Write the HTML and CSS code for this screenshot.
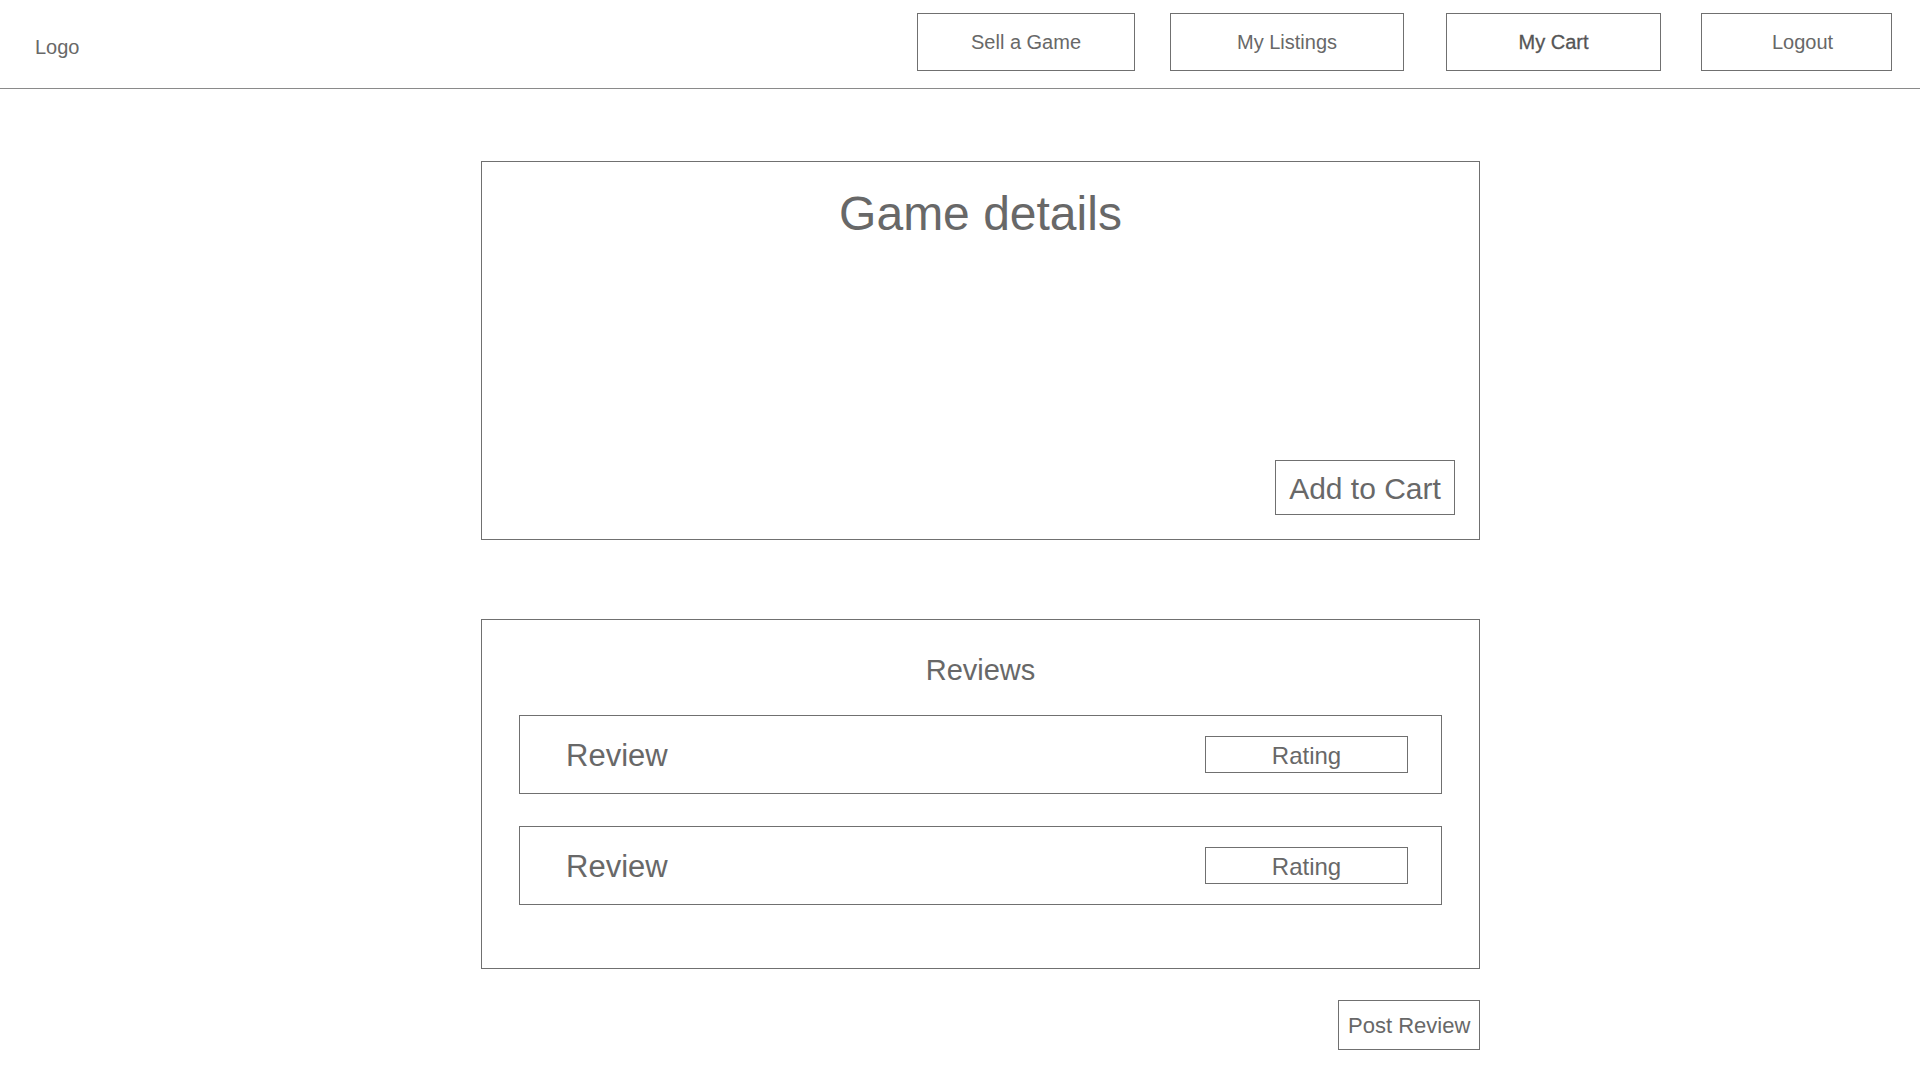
FILE: index.html
```html
<!DOCTYPE html>
<html lang="en">
<head>
<meta charset="utf-8">
<title>Game details</title>
<link rel="stylesheet" href="styles.css">
</head>
<body>
<header class="topbar">
  <div class="logo">Logo</div>
  <nav class="nav">
    <a class="nav-btn nav-sell">Sell a Game</a>
    <a class="nav-btn nav-listings">My Listings</a>
    <a class="nav-btn nav-cart">My Cart</a>
    <a class="nav-btn nav-logout">Logout</a>
  </nav>
</header>
<main class="content">
  <section class="details">
    <h1 class="details-title">Game details</h1>
    <button class="add-cart">Add to Cart</button>
  </section>
  <section class="reviews">
    <h2 class="reviews-title">Reviews</h2>
    <div class="review-row">
      <span class="review-text">Review</span>
      <span class="rating">Rating</span>
    </div>
    <div class="review-row">
      <span class="review-text">Review</span>
      <span class="rating">Rating</span>
    </div>
  </section>
  <div class="post-wrap">
    <button class="post-review">Post Review</button>
  </div>
</main>
</body>
</html>
```
FILE: styles.css
```css
* { box-sizing: border-box; }
html, body { margin: 0; padding: 0; background: #fff; }
body {
  font-family: "Liberation Sans", Arial, sans-serif;
  color: #686868;
  width: 1920px;
  height: 1080px;
  overflow: hidden;
}

.topbar {
  height: 89px;
  display: flex;
  justify-content: space-between;
  align-items: flex-start;
  border-bottom: 1px solid #8a8a8a;
  padding: 0 28px 0 35px;
}
.logo {
  font-size: 20px;
  line-height: 23px;
  margin-top: 36px;
}
.nav {
  display: flex;
  margin-top: 13px;
}
.nav-btn {
  display: flex;
  align-items: center;
  justify-content: center;
  height: 58px;
  border: 1px solid #707070;
  font-size: 20px;
  line-height: 23px;
  color: #686868;
  padding-top: 1px;
}
.nav-sell { width: 218px; }
.nav-listings { width: 234px; margin-left: 35px; }
.nav-cart { width: 215px; margin-left: 42px; color: #555; -webkit-text-stroke: 0.3px #555; }
.nav-logout { width: 191px; margin-left: 40px; padding-left: 12px; }

.content {
  padding-left: 481px;
  width: 1480px;
}

.details {
  margin-top: 72px;
  width: 999px;
  height: 379px;
  border: 1px solid #707070;
  display: flex;
  flex-direction: column;
  align-items: center;
  justify-content: space-between;
  padding: 24px 24px 24px 0;
}
.details-title {
  margin: 0;
  font-weight: normal;
  font-size: 48px;
  line-height: 56px;
  padding-left: 24px;
}
.add-cart {
  align-self: flex-end;
  font-family: inherit;
  font-size: 30px;
  line-height: 34px;
  color: #686868;
  background: #fff;
  border: 1px solid #707070;
  padding: 11px 12px 8px;
  width: 180px;
  height: 55px;
  white-space: nowrap;
}

.reviews {
  margin-top: 79px;
  width: 999px;
  height: 350px;
  border: 1px solid #707070;
  padding: 33px 37px 0;
}
.reviews-title {
  margin: 0 0 28px;
  text-align: center;
  font-weight: normal;
  font-size: 29px;
  line-height: 34px;
}
.review-row {
  height: 79px;
  border: 1px solid #707070;
  display: flex;
  align-items: center;
  justify-content: space-between;
  padding: 0 33px 0 46px;
}
.review-row + .review-row { margin-top: 32px; }
.review-text {
  font-size: 31px;
  line-height: 36px;
  padding-top: 2px;
}
.rating {
  width: 203px;
  height: 37px;
  border: 1px solid #707070;
  display: flex;
  align-items: center;
  justify-content: center;
  font-size: 24px;
  line-height: 28px;
  padding-top: 2px;
}

.post-wrap {
  width: 999px;
  display: flex;
  justify-content: flex-end;
  margin-top: 31px;
}
.post-review {
  font-family: inherit;
  font-size: 22px;
  line-height: 25px;
  color: #686868;
  background: #fff;
  border: 1px solid #707070;
  padding: 12px 9px 11px;
  width: 142px;
  height: 50px;
  white-space: nowrap;
}
```
